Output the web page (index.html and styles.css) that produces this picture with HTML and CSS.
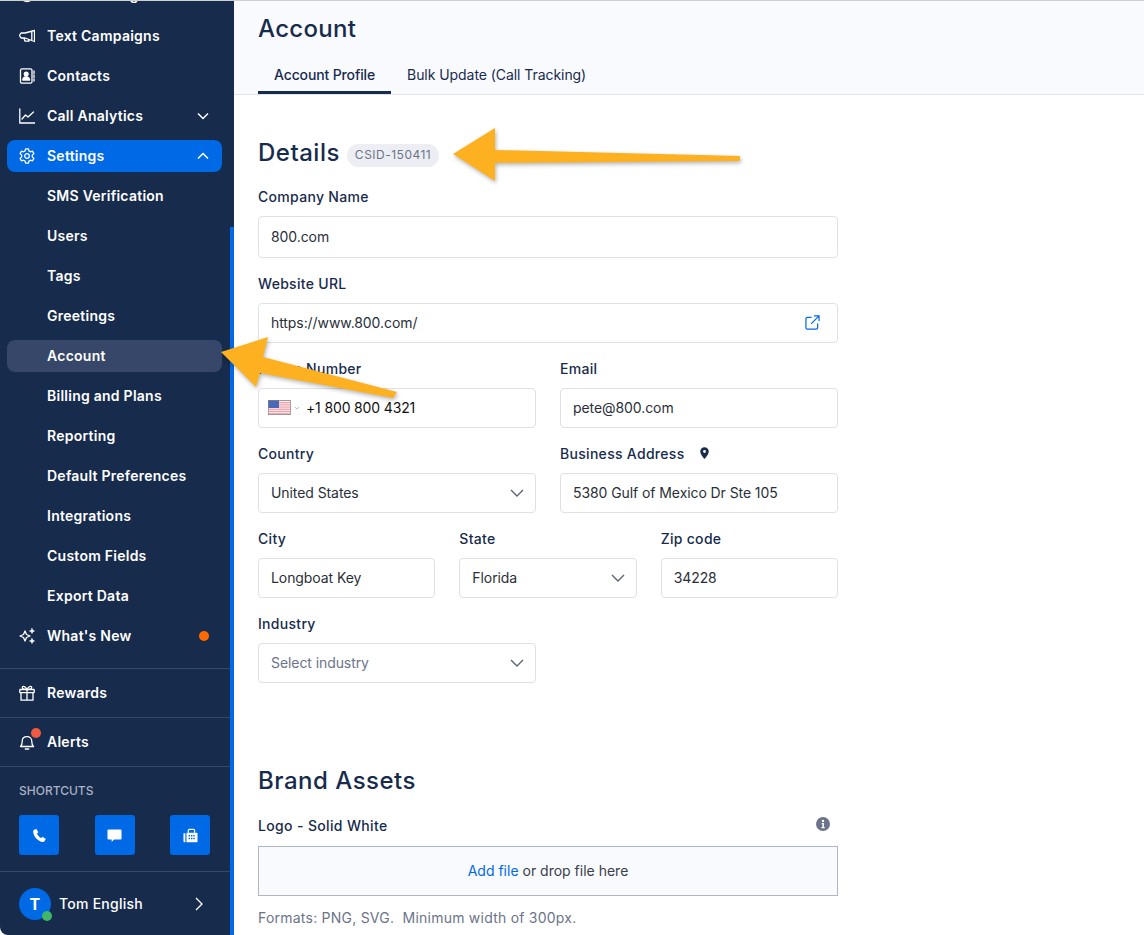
FILE: index.html
```html
<!DOCTYPE html>
<html lang="en">
<head>
  <meta charset="UTF-8" />
  <title>Account</title>
  <link rel="stylesheet" href="styles.css">
</head>
<body>

  <aside class="sidebar">
    <div class="scroll-thumb"></div>
    <nav class="nav">
      <a class="nav-item clipped">
        <svg class="icon" viewBox="0 0 16 16"><circle cx="8" cy="8" r="6.5"/></svg>
        <span>Call Tracking</span>
      </a>
      <a class="nav-item">
        <svg class="icon" viewBox="0 0 16 16"><path d="M15.500 2.500 6 5H2L.5 7.500 2 10h4l9.500 3.500ZM12.800 3.200v9.300M5 10.200l1 3h4l-.4-1.500"/></svg>
        <span>Text Campaigns</span>
      </a>
      <a class="nav-item">
        <svg class="icon" viewBox="0 0 16 16"><rect x="1.500" y=".8" width="11.500" height="14.400" rx="1.500"/><circle cx="7.200" cy="6" r="1.900" fill="#fff"/><path d="M3.800 12c0-4.200 6.800-4.200 6.800 0Z" fill="#fff"/><path d="M15 3v2.500M15 7v2.500M15 11v2"/></svg>
        <span>Contacts</span>
      </a>
      <a class="nav-item">
        <svg class="icon" viewBox="0 0 16 16"><path d="M.8 1v14h15M3 11l3.500-4 2.500 2 5.500-5"/></svg>
        <span>Call Analytics</span>
        <svg class="caret" viewBox="0 0 12 8"><path d="m1 1.500 5 5 5-5"/></svg>
      </a>
      <a class="nav-item active">
        <svg class="icon" viewBox="0 0 16 16"><path d="M6.600.8h2.800l.5 2.100 1.500.9 2.100-.6 1.400 2.400-1.600 1.500v1.800l1.600 1.500-1.400 2.400-2.100-.6-1.500.9-.5 2.100H6.600l-.5-2.100-1.500-.9-2.100.6-1.400-2.400 1.600-1.500V7.100L1.100 5.600l1.400-2.400 2.100.6 1.500-.9Z"/><circle cx="8" cy="8" r="2.300"/></svg>
        <span>Settings</span>
        <svg class="caret" viewBox="0 0 12 8"><path d="m1 6.500 5-5 5 5"/></svg>
      </a>
      <a class="nav-item"><span class="sub">SMS Verification</span></a>
      <a class="nav-item"><span class="sub">Users</span></a>
      <a class="nav-item"><span class="sub">Tags</span></a>
      <a class="nav-item"><span class="sub">Greetings</span></a>
      <a class="nav-item current"><span class="sub">Account</span></a>
      <a class="nav-item"><span class="sub">Billing and Plans</span></a>
      <a class="nav-item"><span class="sub">Reporting</span></a>
      <a class="nav-item"><span class="sub">Default Preferences</span></a>
      <a class="nav-item"><span class="sub">Integrations</span></a>
      <a class="nav-item"><span class="sub">Custom Fields</span></a>
      <a class="nav-item"><span class="sub">Export Data</span></a>
      <a class="nav-item">
        <svg class="icon" viewBox="0 0 16 16"><path d="m6 3 1.500 3.500L11 8 7.500 9.500 6 13 4.500 9.500 1 8l3.500-1.500Z"/><path class="spark" d="m13 .5.800 1.700 1.700.8-1.700.8-.8 1.700-.8-1.700-1.700-.8 1.700-.8ZM13 10.500l.8 1.700 1.700.8-1.700.8-.8 1.700-.8-1.700-1.700-.8 1.700-.8Z"/></svg>
        <span>What's New</span>
        <i class="dot-new"></i>
      </a>
    </nav>

    <div class="side-row first">
      <svg class="icon" viewBox="0 0 16 16"><rect x=".8" y="4.500" width="14.400" height="3.200" rx=".6"/><path d="M2 7.700v7.500h12V7.700M8 4.500v10.700M8 4.500C6 .5 2.800.8 3.400 3c.3 1 2.400 1.500 4.600 1.500Zm0 0c2-4 5.200-3.700 4.600-1.500-.3 1-2.400 1.500-4.600 1.500Z"/></svg>
      <span>Rewards</span>
    </div>
    <div class="side-row">
      <span class="bell">
        <svg class="icon" viewBox="0 0 16 16"><path d="M1.500 12.500c1.500-1.300 1.700-3 1.700-5 0-3 2-4.800 4.800-4.800s4.800 1.800 4.800 4.800c0 2 .2 3.700 1.700 5ZM6.300 15h3.400"/></svg>
        <i class="dot-alert"></i>
      </span>
      <span>Alerts</span>
    </div>

    <div class="shortcuts">
      <div class="shortcuts-title">SHORTCUTS</div>
      <div class="shortcut-list">
        <a class="shortcut">
          <svg viewBox="0 0 16 16"><path d="M2 2.200 4.500.8l2.300 3.700-1.500 1.300c.6 1.800 2.400 3.800 4.500 4.800l1.400-1.400 3.500 2.500-1.400 2.500c-.6.900-1.500 1-2.500.7C5.800 13.500 2.200 9.300 1.300 4.700 1.100 3.600 1.300 2.800 2 2.200Z"/></svg>
        </a>
        <a class="shortcut">
          <svg viewBox="0 0 16 16"><path d="M1.500 1.500h13a1 1 0 0 1 1 1v8.800a1 1 0 0 1-1 1H7.500L5 14.800v-2.500H1.500a1 1 0 0 1-1-1V2.500a1 1 0 0 1 1-1Z"/></svg>
        </a>
        <a class="shortcut">
          <svg viewBox="0 0 16 16"><path d="M.5 5.500h2v9.800h-.8a1.200 1.200 0 0 1-1.200-1.200ZM3.700 5h11a.8.800 0 0 1 .8.800v8.700a.8.800 0 0 1-.8.800h-11Z"/><path d="M5 5V2.500A1.800 1.800 0 0 1 6.800.7h4.400A1.800 1.800 0 0 1 13 2.500V5h-1.300V2.500c0-.3-.2-.5-.5-.5H6.800c-.3 0-.5.200-.5.500V5Z"/><path class="keys" d="M6 7.500h1.500V9H6ZM8.500 7.500H10V9H8.500ZM11 7.500h1.500V9H11ZM6 10.500h1.500V12H6ZM8.500 10.500H10V12H8.500ZM11 10.500h1.500V12H11Z"/></svg>
        </a>
      </div>
    </div>

    <div class="user">
      <span class="avatar">T<i class="online"></i></span>
      <span class="user-name">Tom English</span>
      <svg class="user-caret" viewBox="0 0 8 14"><path d="m1 1 6 6-6 6"/></svg>
    </div>
  </aside>

  <main class="main">
    <header class="page-head">
      <h1>Account</h1>
      <div class="tabs">
        <a class="tab selected">Account Profile</a>
        <a class="tab">Bulk Update (Call Tracking)</a>
      </div>
    </header>

    <section class="content">
      <div class="section-head">
        <h2>Details</h2>
        <span class="badge">CSID-150411</span>
      </div>

      <div class="field">
        <label>Company Name</label>
        <div class="input tall">800.com</div>
      </div>

      <div class="field">
        <label>Website URL</label>
        <div class="input">
          <span class="grow">https://www.800.com/</span>
          <svg class="ext" viewBox="0 0 16 16"><path d="M7 2.500H2.500a1.500 1.500 0 0 0-1.500 1.500v9.500A1.500 1.500 0 0 0 2.500 15H12a1.500 1.500 0 0 0 1.500-1.500V9M6.500 9.500 15 1M9.500 1H15v5.500"/></svg>
        </div>
      </div>

      <div class="row two">
        <div class="field">
          <label>Phone Number</label>
          <div class="input phone">
            <svg class="flag" viewBox="0 0 23 15">
              <rect width="23" height="15" fill="#f7a1a8"/>
              <path d="M0 1.500h23M0 3.800h23M0 6h23M0 8.200h23M0 10.400h23M0 12.600h23" stroke="#eef0f4" stroke-width="1"/>
              <rect width="11" height="8" fill="#4a68b8"/>
              <rect x=".3" y=".3" width="22.400" height="14.400" fill="none" stroke="#85858a" stroke-width=".6"/>
            </svg>
            <svg class="flag-caret" viewBox="0 0 8 5"><path d="m1 1 3 3 3-3"/></svg>
            <span class="phone-number">+1 800 800 4321</span>
          </div>
        </div>
        <div class="field">
          <label>Email</label>
          <div class="input">pete@800.com</div>
        </div>
      </div>

      <div class="row two">
        <div class="field">
          <label>Country</label>
          <div class="input">
            <span class="grow">United States</span>
            <svg class="select-caret" viewBox="0 0 14 8"><path d="m1 1 6 6 6-6"/></svg>
          </div>
        </div>
        <div class="field">
          <label>Business Address
            <svg class="pin" viewBox="0 0 10 13"><path fill-rule="evenodd" d="M5 0a4.700 4.700 0 0 1 4.700 4.700C9.700 8 5 13 5 13S.3 8 .3 4.700A4.700 4.700 0 0 1 5 0Zm0 3.200a1.600 1.600 0 1 0 0 3.200 1.600 1.600 0 0 0 0-3.200Z"/></svg>
          </label>
          <div class="input">5380 Gulf of Mexico Dr Ste 105</div>
        </div>
      </div>

      <div class="row three">
        <div class="field">
          <label>City</label>
          <div class="input">Longboat Key</div>
        </div>
        <div class="field">
          <label>State</label>
          <div class="input">
            <span class="grow">Florida</span>
            <svg class="select-caret" viewBox="0 0 14 8"><path d="m1 1 6 6 6-6"/></svg>
          </div>
        </div>
        <div class="field">
          <label>Zip code</label>
          <div class="input">34228</div>
        </div>
      </div>

      <div class="row two">
        <div class="field">
          <label>Industry</label>
          <div class="input placeholder">
            <span class="grow">Select industry</span>
            <svg class="select-caret" viewBox="0 0 14 8"><path d="m1 1 6 6 6-6"/></svg>
          </div>
        </div>
      </div>

      <h2 class="brand-title">Brand Assets</h2>

      <div class="logo-label">
        <label>Logo - Solid White</label>
        <svg class="info" viewBox="0 0 14 14"><circle cx="7" cy="7" r="7" fill="#6b7488"/><circle cx="7" cy="3.900" r="1.200" fill="#fff"/><path d="M5.700 6h2.200v4h.8v1.200H5.400V10h1V7.200h-.7Z" fill="#fff"/></svg>
      </div>
      <div class="dropzone"><a>Add file</a> or drop file here</div>
      <p class="hint">Formats: PNG, SVG.&nbsp; Minimum width of 300px.</p>
    </section>
  </main>

  <!-- arrows drawn on top of the screenshot -->
  <svg class="arrows" viewBox="0 0 1144 935">
    <path d="M453 154 495 128V150L740 156V161L495 163V181Z"/>
    <path d="M221 352 268 337 263 357 397 392 393 398 260 373 256 387Z"/>
  </svg>

</body>
</html>
```

FILE: styles.css
```css
* {
  box-sizing: border-box;
}
html, body {
  height: 100%;
}
body {
  margin: 0;
  display: flex;
  overflow: hidden;
  font-family: 'Inter', 'Liberation Sans', sans-serif;
  color: #172b4d;
  background: #fff;
  border-top: 1px solid #d0d0d0;
}

/* sidebar */
.sidebar {
  position: relative;
  flex: 0 0 234px;
  height: 934px;
  padding-right: 4px;
  background: #172b4d;
  color: #fff;
  overflow: hidden;
  border-bottom-left-radius: 8px;
  font-size: 14px;
  font-weight: 600;
  letter-spacing: 0.25px;
}
.scroll-thumb {
  position: absolute;
  top: 226px;
  right: 0;
  bottom: 0;
  width: 4px;
  background: #0069e6;
}
.nav {
  margin-top: -21px;
  padding: 0 8px 0 7px;
}
.nav-item {
  display: flex;
  align-items: center;
  height: 32px;
  margin-bottom: 8px;
  padding: 0 12px 1px;
  border-radius: 8px;
}
.nav-item.clipped {
  padding-bottom: 3px;
}
.nav-item.active {
  background: #0069e6;
}
.nav-item.current {
  background: #36476a;
}
.sub {
  padding-left: 28px;
}
.icon {
  flex: none;
  width: 16px;
  height: 16px;
  margin-right: 12px;
  fill: none;
  stroke: #fff;
  stroke-width: 1.300;
  stroke-linejoin: round;
  stroke-linecap: round;
}
.icon .spark {
  fill: #fff;
  stroke-width: .6;
}
.caret {
  width: 12px;
  height: 8px;
  margin-left: auto;
  margin-right: 1px;
  fill: none;
  stroke: #fff;
  stroke-width: 1.500;
}
.dot-new {
  width: 10px;
  height: 10px;
  margin-left: auto;
  margin-right: 1px;
  border-radius: 50%;
  background: #ff6a00;
}
.side-row {
  display: flex;
  align-items: center;
  height: 49px;
  padding: 0 0 1px 19px;
  border-top: 1px solid #36476a;
}
.side-row.first {
  margin-top: 16px;
}
.bell {
  position: relative;
  display: flex;
}
.dot-alert {
  position: absolute;
  top: -6px;
  left: 12px;
  width: 10px;
  height: 10px;
  border-radius: 50%;
  background: #f05a41;
}
.shortcuts {
  height: 105px;
  padding: 16px 20px 0 19px;
  border-top: 1px solid #36476a;
}
.shortcuts-title {
  font-size: 12px;
  font-weight: 500;
  line-height: 15px;
  letter-spacing: 0;
  color: #a9b2c2;
}
.shortcut-list {
  display: flex;
  justify-content: space-between;
  margin-top: 17px;
}
.shortcut {
  display: flex;
  align-items: center;
  justify-content: center;
  width: 40px;
  height: 40px;
  border-radius: 3px;
  background: #0069e6;
}
.shortcut svg {
  width: 15px;
  height: 15px;
  fill: #fff;
}
.shortcut .keys {
  fill: #0069e6;
}
.user {
  display: flex;
  align-items: center;
  height: 64px;
  padding: 0 27px 0 19px;
  border-top: 1px solid #36476a;
  font-weight: 500;
}
.avatar {
  position: relative;
  display: flex;
  align-items: center;
  justify-content: center;
  width: 32px;
  height: 32px;
  border-radius: 50%;
  background: #0069e6;
  font-size: 16px;
  font-weight: 700;
}
.online {
  position: absolute;
  right: -1px;
  bottom: -1px;
  width: 10px;
  height: 10px;
  border-radius: 50%;
  background: #3eb866;
}
.user-name {
  margin-left: 8px;
}
.user-caret {
  width: 8px;
  height: 14px;
  margin-left: auto;
  fill: none;
  stroke: #fff;
  stroke-width: 1.300;
}

/* main area */
.main {
  flex: 1;
  min-width: 0;
}
.page-head {
  height: 94px;
  padding: 0 24px;
  background: #f9fafe;
  border-bottom: 1px solid #e2e4e9;
}
h1 {
  margin: 0;
  padding-top: 13px;
  font-size: 24px;
  font-weight: 500;
  line-height: 30px;
  letter-spacing: 0.3px;
}
.tabs {
  display: flex;
  margin-top: 11px;
}
.tab {
  height: 39px;
  padding: 0 16px;
  font-size: 14px;
  line-height: 40px;
  font-weight: 400;
  letter-spacing: -0.06px;
}
.tab.selected {
  font-weight: 500;
  letter-spacing: -0.13px;
  border-bottom: 3px solid #172b4d;
}
.content {
  width: 628px;
  padding: 0 24px;
}
.section-head {
  display: flex;
  align-items: center;
  gap: 8px;
  height: 30px;
  margin-top: 43px;
  margin-bottom: 19px;
}
h2 {
  margin: 0;
  font-size: 24px;
  font-weight: 500;
  line-height: 30px;
  letter-spacing: 0.5px;
}
.badge {
  margin-top: 4px;
  margin-left: -1px;
  padding: 0 8px;
  height: 23px;
  line-height: 22px;
  border-radius: 12px;
  background: #eceef3;
  color: #6b7488;
  font-size: 12px;
  letter-spacing: 0.5px;
}
.field {
  margin-bottom: 16px;
  min-width: 0;
}
label {
  display: block;
  height: 20px;
  margin-bottom: 9px;
  font-size: 14px;
  font-weight: 500;
  line-height: 20px;
  letter-spacing: 0.3px;
}
.input {
  display: flex;
  align-items: center;
  height: 40px;
  padding: 0 12px 1px;
  border: 1px solid #dfe1e7;
  border-radius: 4px;
  background: #fff;
  color: #2a2f3a;
  font-size: 14px;
  letter-spacing: -0.08px;
}
.input.tall {
  height: 42px;
}
.input.placeholder {
  color: #6b7488;
}
.grow {
  flex: 1;
}
.row {
  display: grid;
  column-gap: 24px;
}
.row.two {
  grid-template-columns: 1fr 1fr;
}
.row.three {
  grid-template-columns: 1fr 1fr 1fr;
}
.ext {
  width: 15px;
  height: 15px;
  margin-right: 5px;
  fill: none;
  stroke: #0069e6;
  stroke-width: 1.300;
}
.select-caret {
  width: 14px;
  height: 8px;
  margin-right: -1px;
  fill: none;
  stroke: #5a6478;
  stroke-width: 1.400;
}
.phone {
  padding-left: 9px;
}
.flag {
  width: 23px;
  height: 15px;
}
.flag-caret {
  width: 6px;
  height: 4px;
  margin-left: 3px;
  fill: none;
  stroke: #a0a5b0;
  stroke-width: 1;
}
.phone-number {
  margin-left: 6px;
  color: #111;
  letter-spacing: -0.15px;
}
.pin {
  width: 9px;
  height: 12px;
  margin-left: 11px;
  fill: #172b4d;
}
.brand-title {
  margin-top: 53px;
  padding-top: 14px;
  height: 45px;
}
.logo-label {
  display: flex;
  justify-content: space-between;
  margin-top: 19px;
}
.logo-label label {
  margin-bottom: 10px;
  letter-spacing: 0.35px;
}
.info {
  width: 14px;
  height: 14px;
  margin: 1px 8px 0 0;
}
.dropzone {
  height: 50px;
  border: 1px solid #b0b6c6;
  background: #f9fafe;
  color: #3a3f4a;
  font-size: 14px;
  line-height: 48px;
  text-align: center;
}
.dropzone a {
  color: #0069e6;
}
.hint {
  margin: 13px 0 0;
  color: #6b7488;
  font-size: 14px;
  line-height: 18px;
  letter-spacing: 0.23px;
}

/* annotation arrows */
.arrows {
  position: absolute;
  top: 0;
  left: 0;
  width: 1144px;
  height: 935px;
  pointer-events: none;
  filter: drop-shadow(1px 2px 2px rgba(0,0,0,0.3));
}
.arrows path {
  fill: #feb120;
}
```
